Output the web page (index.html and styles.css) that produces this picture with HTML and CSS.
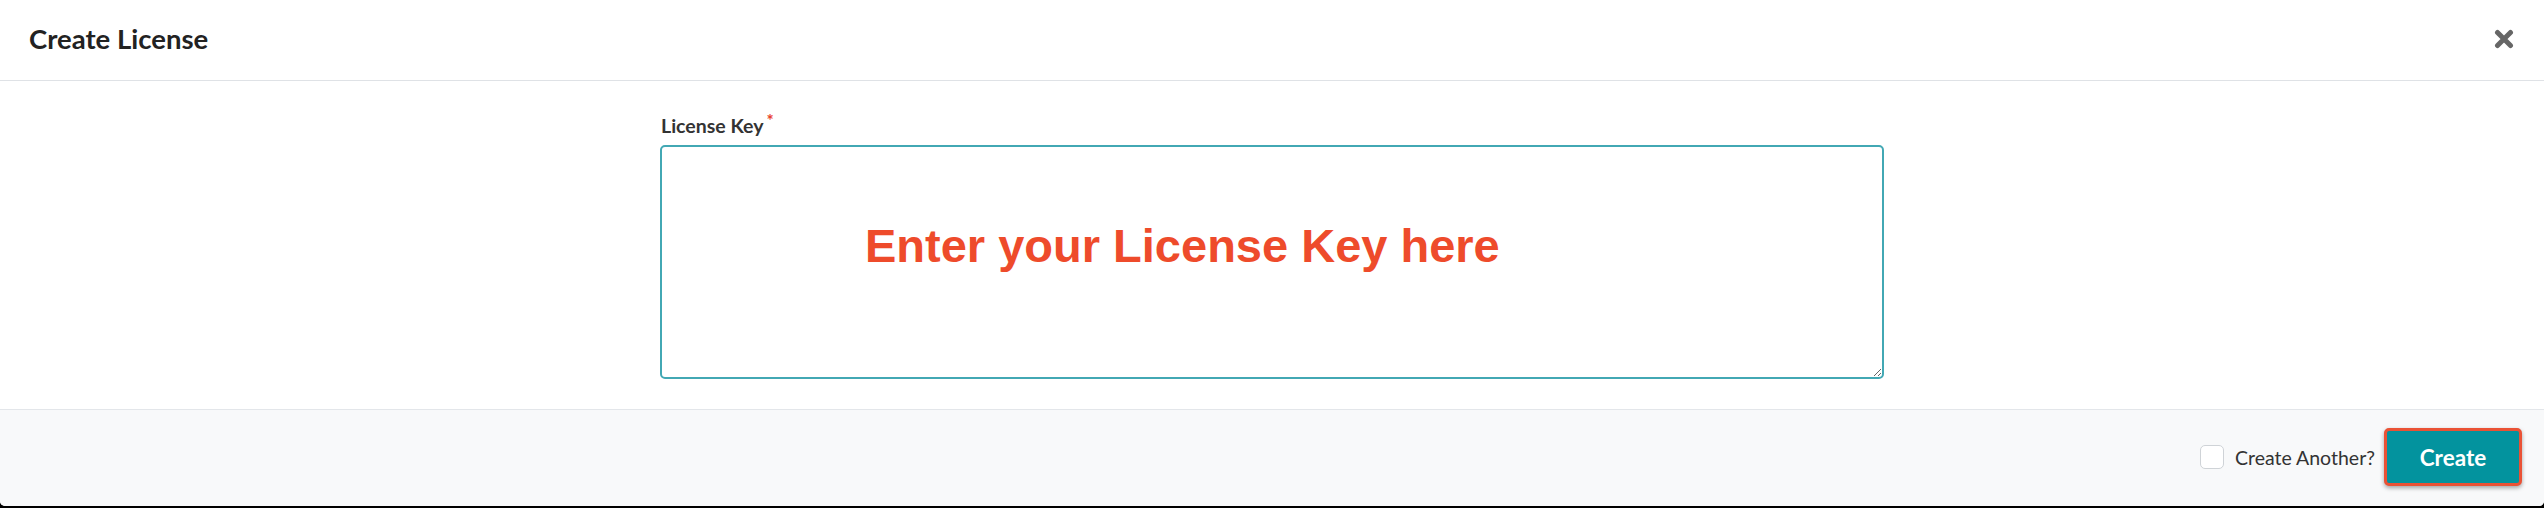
FILE: index.html
```html
<!DOCTYPE html>
<html lang="en">
<head>
<meta charset="utf-8">
<title>Create License</title>
<link rel="stylesheet" href="styles.css">
</head>
<body>
<div class="modal">
  <header class="modal-header">
    <h1 class="modal-title">Create License</h1>
    <button class="close" aria-label="Close">
      <svg width="20" height="20" viewBox="0 0 20 20"><path d="M3.5 3.5 L16.5 16.5 M16.5 3.5 L3.5 16.5" stroke="#666" stroke-width="5" stroke-linecap="round"/></svg>
    </button>
  </header>
  <main class="modal-body">
    <div class="field">
      <label class="field-label" for="key">License Key<span class="req">*</span></label>
      <div class="area-wrap">
        <textarea id="key" class="area"></textarea>
        <span class="hint">Enter your License Key here</span>
      </div>
    </div>
  </main>
  <footer class="modal-footer">
    <label class="check"><span class="box"></span>Create Another?</label>
    <button class="btn-create">Create</button>
  </footer>
</div>
</body>
</html>
```

FILE: styles.css
```css
html, body {
  margin: 0;
  padding: 0;
  background: #000;
}
body {
  font-family: Lato, "Open Sans", sans-serif;
  color: #333;
}
.modal {
  height: 506px;
  background: #fff;
  border-radius: 0 0 5px 5px;
  display: flex;
  flex-direction: column;
  overflow: hidden;
}
.modal-header {
  height: 81px;
  box-sizing: border-box;
  border-bottom: 1px solid #dfe2e6;
  display: flex;
  align-items: center;
  justify-content: space-between;
  padding: 0 30px 0 29px;
}
.modal-title {
  margin: 0;
  font-size: 27.5px;
  font-weight: 700;
  color: #222;
  padding-bottom: 4px;
}
.close {
  border: 0;
  background: none;
  padding: 0;
  width: 20px;
  height: 20px;
  display: flex;
  margin-bottom: 3px;
}
.modal-body {
  flex: 1;
  display: flex;
  justify-content: center;
  padding-top: 28px;
}
.field {
  width: 1224px;
  display: flex;
  flex-direction: column;
}
.field-label {
  font-size: 19.5px;
  font-weight: 700;
  color: #333;
  margin-left: 1px;
  line-height: 24px;
  margin-bottom: 7px;
}
.req {
  color: #e8412c;
  font-size: 17px;
  margin-left: 3px;
  vertical-align: 6px;
}
.area-wrap {
  position: relative;
  height: 234px;
}
.area {
  width: 100%;
  height: 234px;
  box-sizing: border-box;
  border: 2px solid #42a8b4;
  border-radius: 5px;
  background: #fff;
  outline: none;
  margin: 0;
  display: block;
}
.hint {
  position: absolute;
  left: 205px;
  top: 73px;
  font-family: "Liberation Sans", Arial, sans-serif;
  font-weight: 700;
  font-size: 47px;
  color: #ee4b2b;
  pointer-events: none;
  white-space: nowrap;
}
.modal-footer {
  height: 97px;
  box-sizing: border-box;
  border-top: 1px solid #e3e6ea;
  background: #f8f9fa;
  display: flex;
  justify-content: flex-end;
  align-items: center;
  padding: 0 22px 2px 0;
}
.check {
  display: flex;
  align-items: center;
  gap: 11px;
  font-size: 19.5px;
  color: #333;
  margin-right: 9px;
}
.box {
  width: 24px;
  height: 24px;
  box-sizing: border-box;
  border: 1px solid #cfd3d7;
  border-radius: 5px;
  background: #fff;
}
.btn-create {
  width: 138px;
  height: 58px;
  box-sizing: border-box;
  border: 3px solid #ea5235;
  border-radius: 5px;
  background: #03939e;
  color: #fff;
  font-family: Lato, sans-serif;
  font-weight: 700;
  font-size: 22.5px;
  box-shadow: 0 2px 4px rgba(0,0,0,0.35);
  padding: 0;
}
```
